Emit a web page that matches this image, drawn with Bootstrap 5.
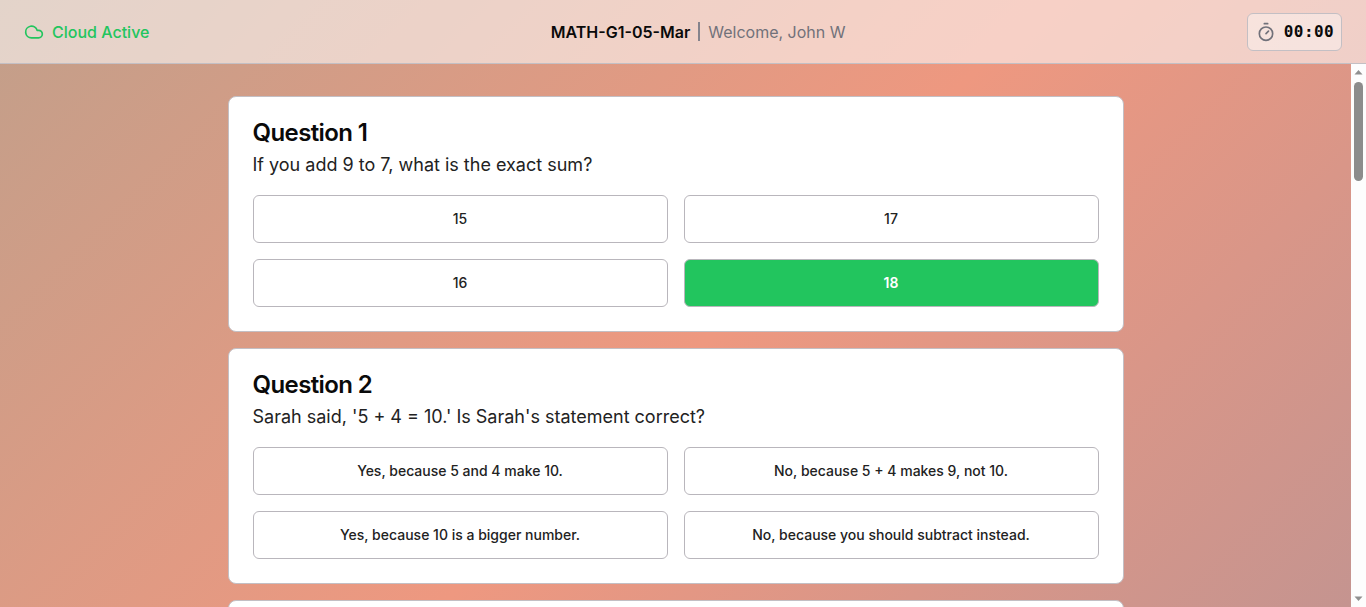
<!DOCTYPE html>
<html lang="en">
  <head>
    <meta charset="UTF-8" />
    <meta name="viewport" content="width=device-width, initial-scale=1.0" />
    <title>MATH-G1-05-Mar</title>
    <link
      href="https://cdn.jsdelivr.net/npm/bootstrap@5.3.0/dist/css/bootstrap.min.css"
      rel="stylesheet"
    />
    <style>
      html,
      body {
        height: 100%;
      }
      body {
        font-family: Inter, "Liberation Sans", sans-serif;
        color: #0a0a0a;
        background: linear-gradient(135deg, #c29f8a 0%, #ee9880 53%, #c49490 100%);
        overflow: hidden;
      }
      .top-bar {
        height: 64px;
        padding: 0 24px;
        background: rgba(255, 255, 255, 0.55);
        border-bottom: 1px solid #c3bfc4;
      }
      .cloud-status {
        color: #22c55e;
        font-weight: 500;
      }
      .test-name {
        font-weight: 600;
      }
      .title-sep {
        width: 2px;
        height: 19px;
        margin: 0 8px;
        background: #85838c;
      }
      .welcome-text {
        color: #71717a;
      }
      .timer-box {
        height: 38px;
        padding: 0 7px 0 8px;
        border: 1px solid #c3bfc4;
        border-radius: 6px;
        background: rgba(255, 255, 255, 0.4);
        color: #71717a;
      }
      .timer-value {
        font-family: "DejaVu Sans Mono", monospace;
        font-weight: 700;
        letter-spacing: 0.4px;
        color: #0a0a0a;
      }
      .page-body {
        height: calc(100% - 64px);
      }
      .scroll-pane {
        overflow: hidden;
        padding: 32px 0;
      }
      .quiz-column {
        width: 896px;
      }
      .question-card {
        border: 1px solid #c3bfc4;
        border-radius: 8px;
        padding: 24px;
        background: #fff;
      }
      .question-title {
        font-size: 24px;
        line-height: 24px;
        font-weight: 600;
        letter-spacing: -0.6px;
        margin-bottom: 6px;
      }
      .question-text {
        font-size: 18px;
        line-height: 28px;
        color: #222;
        margin-bottom: 16px;
      }
      .answer-grid {
        display: grid;
        grid-template-columns: 1fr 1fr;
        gap: 16px;
      }
      .answer-btn {
        height: 48px;
        padding: 0 0 2px;
        font-size: 14px;
        font-weight: 450;
        color: #222;
        background: #fff;
        border: 1px solid #b9b6bc;
        border-radius: 6px;
      }
      .answer-btn.picked {
        background: #22c55e;
        color: #fff;
        font-weight: 600;
      }
      .scroll-rail {
        width: 15px;
        background: #fdfdfd;
      }
      .rail-arrow {
        height: 18px;
      }
      .rail-thumb {
        width: 9px;
        height: 99px;
        border-radius: 5px;
        background: #8c8c8c;
      }
    </style>
  </head>
  <body>
    <header class="top-bar d-flex align-items-center justify-content-between">
      <div class="cloud-status d-flex align-items-center gap-2">
        <svg width="20" height="20" viewBox="0 0 24 24" fill="none" stroke="currentColor" stroke-width="2" stroke-linecap="round" stroke-linejoin="round"><path d="M17.5 19H9a7 7 0 1 1 6.71-9h1.79a4.5 4.5 0 1 1 0 9Z" /></svg>
        <span>Cloud Active</span>
      </div>
      <div class="d-flex align-items-center">
        <span class="test-name">MATH-G1-05-Mar</span>
        <span class="title-sep"></span>
        <span class="welcome-text">Welcome, John W</span>
      </div>
      <div class="timer-box d-flex align-items-center gap-2">
        <svg width="20" height="20" viewBox="0 0 24 24" fill="none" stroke="currentColor" stroke-width="2" stroke-linecap="round" stroke-linejoin="round"><line x1="10" x2="14" y1="2" y2="2" /><line x1="12" x2="15" y1="14" y2="11" /><circle cx="12" cy="14" r="8" /></svg>
        <span class="timer-value">00:00</span>
      </div>
    </header>
    <div class="page-body d-flex">
      <main class="scroll-pane flex-grow-1">
        <div id="questions" class="quiz-column mx-auto d-flex flex-column gap-3"></div>
      </main>
      <div class="scroll-rail d-flex flex-column align-items-center">
        <svg class="rail-arrow" width="9" viewBox="0 0 9 18"><path d="M0.5 10.5 4.5 6 8.5 10.5Z" fill="#8f8f8f" /></svg>
        <div class="rail-thumb"></div>
        <svg class="rail-arrow mt-auto" width="9" viewBox="0 0 9 18"><path d="M0.5 7.5 4.5 12 8.5 7.5Z" fill="#8f8f8f" /></svg>
      </div>
    </div>
    <script>
      const questions = [
        { text: "If you add 9 to 7, what is the exact sum?", options: ["15", "17", "16", "18"], picked: 3 },
        { text: "Sarah said, '5 + 4 = 10.' Is Sarah's statement correct?", options: ["Yes, because 5 and 4 make 10.", "No, because 5 + 4 makes 9, not 10.", "Yes, because 10 is a bigger number.", "No, because you should subtract instead."] },
        { text: "", options: [] },
      ];

      const list = document.getElementById("questions");
      questions.forEach((q, i) => {
        const card = document.createElement("section");
        card.className = "question-card";
        const buttons = q.options
          .map((opt, n) => `<button type="button" class="answer-btn${n === q.picked ? " picked" : ""}">${opt}</button>`)
          .join("");
        card.innerHTML = q.text
          ? `
          <h2 class="question-title">Question ${i + 1}</h2>
          <p class="question-text">${q.text}</p>
          <div class="answer-grid">${buttons}</div>
        `
          : `<div class="answer-grid"><div class="answer-btn"></div></div>`;
        list.appendChild(card);
      });
    </script>
    <script src="https://cdn.jsdelivr.net/npm/bootstrap@5.3.0/dist/js/bootstrap.bundle.min.js"></script>
  </body>
</html>
